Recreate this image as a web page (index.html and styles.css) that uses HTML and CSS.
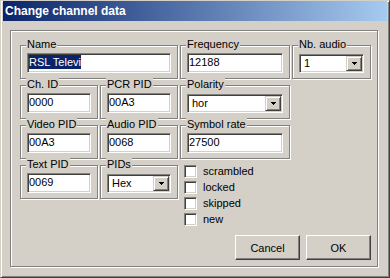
FILE: index.html
```html
<!DOCTYPE html>
<html lang="en">
<head>
<meta charset="UTF-8">
<meta name="viewport" content="width=device-width, initial-scale=1.0">
<title>Change channel data</title>
<link rel="stylesheet" href="styles.css">
</head>
<body>
<div class="window">
  <div class="titlebar">Change channel data</div>

  <div class="frame">
    <div class="grid">
      <div class="group span2">
        <span class="legend">Name</span>
        <div class="field"><span class="sel">RSL Televi</span></div>
      </div>
      <div class="group">
        <span class="legend">Frequency</span>
        <div class="field">12188</div>
      </div>
      <div class="group">
        <span class="legend">Nb. audio</span>
        <div class="combo"><span class="combo-text">1</span><span class="drop"><svg width="5" height="3" viewBox="0 0 5 3"><path d="M0 0h5v1h-1v1h-1v1h-1v-1h-1v-1h-1z" fill="#000"/></svg></span></div>
      </div>

      <div class="group first">
        <span class="legend">Ch. ID</span>
        <div class="field">0000</div>
      </div>
      <div class="group">
        <span class="legend">PCR PID</span>
        <div class="field">00A3</div>
      </div>
      <div class="group">
        <span class="legend">Polarity</span>
        <div class="combo"><span class="combo-text">hor</span><span class="drop"><svg width="5" height="3" viewBox="0 0 5 3"><path d="M0 0h5v1h-1v1h-1v1h-1v-1h-1v-1h-1z" fill="#000"/></svg></span></div>
      </div>

      <div class="group first">
        <span class="legend">Video PID</span>
        <div class="field">00A3</div>
      </div>
      <div class="group">
        <span class="legend">Audio PID</span>
        <div class="field">0068</div>
      </div>
      <div class="group">
        <span class="legend">Symbol rate</span>
        <div class="field">27500</div>
      </div>

      <div class="group first">
        <span class="legend">Text PID</span>
        <div class="field">0069</div>
      </div>
      <div class="group">
        <span class="legend">PIDs</span>
        <div class="combo"><span class="combo-text">Hex</span><span class="drop"><svg width="5" height="3" viewBox="0 0 5 3"><path d="M0 0h5v1h-1v1h-1v1h-1v-1h-1v-1h-1z" fill="#000"/></svg></span></div>
      </div>
      <div class="checks">
        <label class="check"><span class="box"></span>scrambled</label>
        <label class="check"><span class="box"></span>locked</label>
        <label class="check"><span class="box"></span>skipped</label>
        <label class="check"><span class="box"></span>new</label>
      </div>

      <div class="buttons">
        <button class="btn">Cancel</button>
        <button class="btn">OK</button>
      </div>
    </div>
  </div>
</div>
</body>
</html>
```

FILE: styles.css
```css
html, body {
  margin: 0;
  padding: 0;
}

body {
  background-color: #d4d0c8;
  font-family: "Liberation Sans", Arial, sans-serif;
  font-size: 11px;
  color: #000;
}

.window {
  width: 390px;
  height: 278px;
  box-sizing: border-box;
  padding: 0 2px 2px 2px;
  border: 1px solid;
  border-color: #d4d0c8 #404040 #404040 #d4d0c8;
  box-shadow: inset 1px 1px #fff, inset -1px -1px #808080;
  background-color: #d4d0c8;
}

.titlebar {
  height: 20px;
  box-sizing: border-box;
  padding: 1px 0 0 2px;
  line-height: 19px;
  font-size: 12px;
  font-weight: bold;
  color: #fff;
  background: linear-gradient(to right, #0a246a, #a6caf0);
  white-space: nowrap;
}

/* outer etched frame */
.frame {
  margin: 9px 0 0 7px;
  width: 368px;
  height: 237px;
  box-sizing: border-box;
  padding: 14px 5px 0 9px;
  border: 1px solid #808080;
  box-shadow: inset 1px 1px #fff, 1px 1px #fff;
}

.grid {
  display: grid;
  grid-template-columns: 78px 78px 110px 79px;
  column-gap: 2px;
  row-gap: 6px;
  align-items: start;
}

.group {
  position: relative;
  height: 34px;
  box-sizing: border-box;
  padding: 7px 6px 5px 6px;
  border: 1px solid #808080;
  box-shadow: inset 1px 1px #fff, 1px 1px #fff;
}

.span2 {
  grid-column: span 2;
}

.first {
  grid-column: 1;
}

.legend {
  position: absolute;
  top: -8px;
  left: 5px;
  padding: 0 1px;
  line-height: 13px;
  background-color: #d4d0c8;
  white-space: nowrap;
}

.field {
  height: 20px;
  box-sizing: border-box;
  padding-left: 1px;
  line-height: 16px;
  background-color: #fff;
  border: 1px solid;
  border-color: #808080 #fff #fff #808080;
  box-shadow: inset 1px 1px #404040, inset -1px -1px #d4d0c8;
  white-space: nowrap;
  overflow: hidden;
}

.sel {
  display: inline-block;
  line-height: 14px;
  background-color: #0a246a;
  color: #fff;
}

.combo {
  display: flex;
  height: 19px;
  margin-top: 1px;
  box-sizing: border-box;
  padding: 1px;
  background-color: #fff;
  border: 1px solid;
  border-color: #808080 #fff #fff #808080;
  box-shadow: inset 1px 1px #404040, inset -1px -1px #d4d0c8;
}

.combo-text {
  flex: 1;
  padding-left: 3px;
  line-height: 15px;
}

.drop {
  display: flex;
  align-items: center;
  justify-content: center;
  width: 16px;
  box-sizing: border-box;
  background-color: #d4d0c8;
  border: 1px solid;
  border-color: #d4d0c8 #404040 #404040 #d4d0c8;
  box-shadow: inset 1px 1px #fff, inset -1px -1px #808080;
}

.drop svg {
  display: block;
}

.checks {
  display: flex;
  flex-direction: column;
  gap: 3px;
  padding-left: 4px;
}

.check {
  display: flex;
  align-items: center;
  gap: 6px;
  height: 13px;
  line-height: 13px;
  white-space: nowrap;
}

.box {
  width: 13px;
  height: 13px;
  box-sizing: border-box;
  background-color: #fff;
  border: 1px solid;
  border-color: #808080 #fff #fff #808080;
  box-shadow: inset 1px 1px #404040, inset -1px -1px #d4d0c8;
}

.buttons {
  grid-column: 1 / -1;
  display: flex;
  justify-content: flex-end;
  gap: 6px;
  margin-top: 3px;
}

.btn {
  width: 65px;
  height: 25px;
  box-sizing: border-box;
  padding: 0;
  font-family: "Liberation Sans", Arial, sans-serif;
  font-size: 11px;
  color: #000;
  background-color: #d4d0c8;
  border: 1px solid;
  border-color: #fff #404040 #404040 #fff;
  box-shadow: inset -1px -1px #808080;
}
```
